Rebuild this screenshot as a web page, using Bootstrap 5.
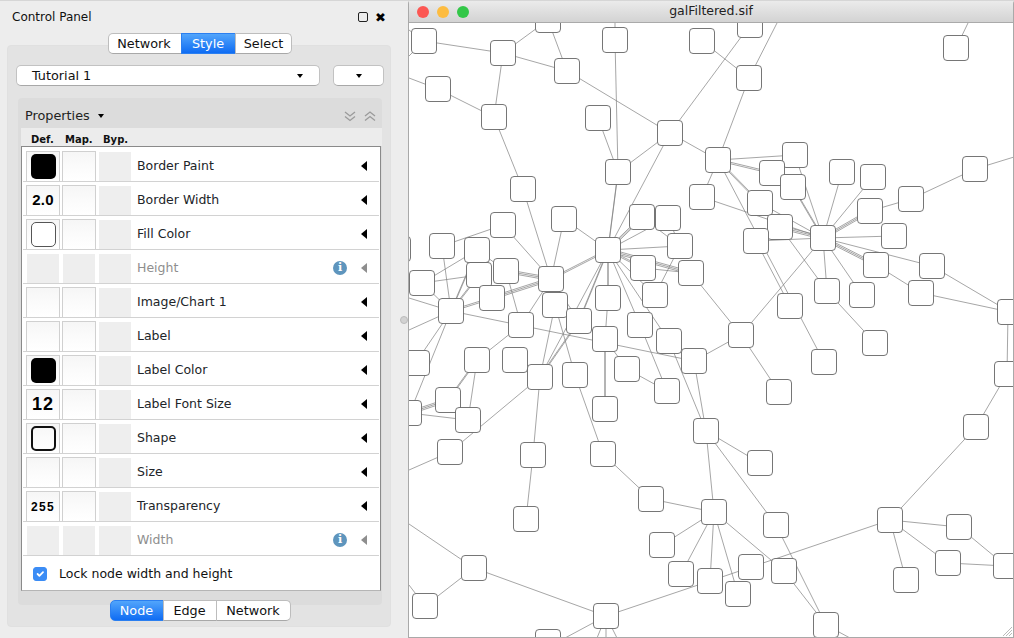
<!DOCTYPE html>
<html lang="en">
<head>
  <meta charset="UTF-8" />
  <title>Control Panel - galFiltered.sif</title>
  <link href="https://cdn.jsdelivr.net/npm/bootstrap@5.3.3/dist/css/bootstrap.min.css" rel="stylesheet" />
  <style>
    html, body { height: 100%; }
    body {
      background: #ededed;
      color: #111;
      font-family: "DejaVu Sans", "Liberation Sans", sans-serif;
      font-size: 12.5px;
      overflow: hidden;
      border-top: 1px solid #d6d6d6;
    }
    /* left dock */
    .dock { width: 399px; padding: 0 8px 11px 7px; flex: none; }
    .dock-title { height: 31px; padding: 1px 5px 0 5px; font-size: 12px; }
    .dock-max { width: 10px; height: 10px; border: 1.5px solid #222; border-radius: 2px; }
    .dock-close { font-size: 13px; line-height: 1; color: #000; margin-left: 7px; }
    .dock-box { background: #e3e3e3; border: 1px solid #e0e0e0; border-radius: 4px; height: 582px; margin-top: 13px; padding: 0 6px 0 8px; }
    .seg { margin-top: -13px; }
    .seg .btn {
      background: #fff;
      border: 1px solid #bdbdbd;
      border-bottom-color: #a8a8a8;
      color: #111;
      font-size: 12.8px;
      line-height: 18px;
      padding: 0;
      border-radius: 5px;
      height: 21px;
    }
    .seg .btn.on { background: linear-gradient(#52a5fb, #0f6cf3); border-color: #2b7ff0; color: #fff; }
    .seg .seg-net-top { width: 74px; flex: none; padding-right: 2px; }
    .seg .seg-style { width: 55px; flex: none; padding-right: 1px; }
    .seg .seg-select { width: 57px; flex: none; }
    .seg .seg-node { width: 54px; flex: none; }
    .seg .seg-net-bottom { width: 75px; flex: none; }
    .pick-row { margin-top: 11px; gap: 13px; }
    .pick {
      height: 21px; background: #fff; border: 1px solid #c2c2c2; border-bottom-color: #a8a8a8;
      border-radius: 5px; font-size: 12.8px; flex: none;
    }
    .pick-main { width: 304px; padding: 0 16px 0 15px; }
    .pick-side { width: 51px; }
    .tri-down { width: 0; height: 0; border-left: 3.5px solid transparent; border-right: 3.5px solid transparent; border-top: 4px solid #000; }
    .props { background: #dcdcdc; border-radius: 4px; margin: 12px 0 0 2px; height: 507px; padding: 0 1px 0 3px; width: 364px; }
    .props-head { height: 30px; padding: 6px 5px 0 4px; font-size: 12.8px; color: #222; flex: none; }
    .props-cols { height: 18px; background: #ececec; margin: 0 -1px 0 0; padding-top: 4px; font-size: 10px; font-weight: 700; flex: none; }
    .props-cols span { display: block; }
    .col-def { width: 34px; margin-left: 10px; }
    .col-map { width: 38px; }
    .prop-list { background: #fff; border: 1px solid #8a8a8a; border-bottom-color: #b5b5b5; border-radius: 0; height: 445px; width: 360px; padding-top: 1px; }
    .prop-row {
      height: 34px; border: 0; border-bottom: 1px solid #d2d2d2; border-radius: 0;
      padding: 3px 12px 0 3px; margin: 0 1px; font-size: 12.5px; background: #fff;
      gap: 2px; flex: none;
    }
    .prop-row.off { color: #8e8e8e; }
    .cell {
      width: 34px; height: 30px; flex: none;
      background: linear-gradient(#f6f6f6, #fbfbfb 50%, #fff);
      border: 1px solid #d0d0d0; border-bottom: 0;
      font-weight: 700; color: #000;
      font-family: "Liberation Sans", sans-serif;
    }
    .cell-byp { background: #eee; border: 0; width: 32px; height: 29px; margin: 1px 0 0 1px; }
    .prop-row.off .cell { background: #eee; border: 0; width: 32px; height: 29px; margin: 1px 1px 0 1px; }
    .prop-row.off .cell.cell-byp { margin-left: 1px; margin-right: 0; }
    .val-big { font-size: 15px; letter-spacing: .2px; }
    .val-large { font-size: 18px; letter-spacing: 1px; }
    .val-num { font-size: 12px; letter-spacing: 1.4px; }
    .swatch { width: 25px; height: 25px; border-radius: 5px; }
    .swatch-fill { background: #000; }
    .swatch-white { background: #fff; border: 1px solid #555; }
    .swatch-shape { background: transparent; border: 2px solid #111; }
    .prop-name { margin-left: 4px; }
    .tri-left { width: 0; height: 0; border-top: 5.5px solid transparent; border-bottom: 5.5px solid transparent; border-right: 6px solid #000; }
    .off .tri-left { border-right-color: #8e8e8e; }
    .info-dot {
      width: 14px; height: 14px; border-radius: 50%; background: #5e95bd; color: #fff;
      font: 700 11px/14px "DejaVu Serif", serif; text-align: center; margin-right: 14px;
    }
    .lock-row { height: 33px; padding: 3px 0 0 10px; margin: 0 1px; flex: none; }
    .lock-row .form-check-input { width: 14px; height: 14px; margin: 0 12px 0 0; border-radius: 3px; background-color: #3b8cf5; border-color: #3b8cf5; float: none; opacity: 1; flex: none; }
    .seg-bottom { margin-top: -5px; }
    /* splitter */
    .split { width: 9px; flex: none; }
    .split-dot { width: 8px; height: 8px; border-radius: 50%; background: #d2d2d2; border: 1px solid #bbb; }
    /* network window */
    .net-win { border: 1px solid #a9a9a9; border-top: 0; border-radius: 4px 4px 0 0; min-width: 0; margin-top: -1px; }
    .net-bar {
      height: 23px; flex: none; position: relative;
      background: linear-gradient(#ebebeb, #d3d3d3);
      border-top: 1px solid #d9d9d9; border-bottom: 1px solid #aaa;
      font-size: 12.5px; color: #222;
    }
    .lights { position: absolute; left: 8px; top: 5px; gap: 8px; }
    .light { width: 12px; height: 12px; border-radius: 50%; }
    .light-r { background: #fc5753; }
    .light-y { background: #fdbc40; }
    .light-g { background: #33c748; }
    .net-canvas { background: #fff; display: block; width: 604px; height: 614px; }
  </style>
</head>
<body class="d-flex">

  <!-- Control panel -->
  <div class="dock d-flex flex-column">
    <div class="dock-title d-flex align-items-center justify-content-between">
      <span>Control Panel</span>
      <span class="d-flex align-items-center"><span class="dock-max"></span><span class="dock-close">✖</span></span>
    </div>
    <div class="dock-box d-flex flex-column">
      <div class="btn-group seg align-self-center">
        <button class="btn seg-net-top" type="button">Network</button>
        <button class="btn on seg-style" type="button">Style</button>
        <button class="btn seg-select" type="button">Select</button>
      </div>
      <div class="d-flex pick-row">
        <div class="pick pick-main d-flex align-items-center justify-content-between"><span>Tutorial 1</span><span class="tri-down"></span></div>
        <div class="pick pick-side d-flex align-items-center justify-content-center"><span class="tri-down"></span></div>
      </div>
      <div class="props d-flex flex-column">
        <div class="props-head d-flex align-items-center">
          <span>Properties</span><span class="tri-down ms-2"></span>
          <svg class="ms-auto" width="12" height="12" viewBox="0 0 12 12" fill="none" stroke="#9a9a9a" stroke-width="1.3"><path d="M1 2l5 4 5-4M1 6.500l5 4 5-4"/></svg>
          <svg class="ms-2" width="12" height="12" viewBox="0 0 12 12" fill="none" stroke="#9a9a9a" stroke-width="1.3"><path d="M1 6l5-4 5 4M1 10.500l5-4 5 4"/></svg>
        </div>
        <div class="props-cols d-flex align-items-center"><span class="col-def">Def.</span><span class="col-map">Map.</span><span>Byp.</span></div>
        <div class="prop-list list-group" id="propList"></div>
      </div>
      <div class="btn-group seg seg-bottom align-self-center">
        <button class="btn on seg-node" type="button">Node</button>
        <button class="btn seg-node" type="button">Edge</button>
        <button class="btn seg-net-bottom" type="button">Network</button>
      </div>
    </div>
  </div>

  <div class="split d-flex align-items-center justify-content-center"><span class="split-dot"></span></div>

  <!-- Network view -->
  <div class="net-win flex-grow-1 d-flex flex-column">
    <div class="net-bar d-flex align-items-center justify-content-center">
      <div class="lights d-flex"><span class="light light-r"></span><span class="light light-y"></span><span class="light light-g"></span></div>
      <span>galFiltered.sif</span>
    </div>
    <svg class="net-canvas" id="net" viewBox="409 23 604 614" xmlns="http://www.w3.org/2000/svg"></svg>
  </div>

  <script>
    // Visual property rows
    var props = [
      ["Border Paint", '<span class="swatch swatch-fill"></span>'],
      ["Border Width", '<span class="val-big">2.0</span>'],
      ["Fill Color", '<span class="swatch swatch-white"></span>'],
      ["Height", "", true],
      ["Image/Chart 1", ""],
      ["Label", ""],
      ["Label Color", '<span class="swatch swatch-fill"></span>'],
      ["Label Font Size", '<span class="val-large">12</span>'],
      ["Shape", '<span class="swatch swatch-shape"></span>'],
      ["Size", ""],
      ["Transparency", '<span class="val-num">255</span>'],
      ["Width", "", true]
    ];
    var rows = props.map(function (p) {
      return '<div class="prop-row list-group-item d-flex' + (p[2] ? ' off' : '') + '">' +
        '<div class="cell d-flex align-items-center justify-content-center">' + p[1] + '</div>' +
        '<div class="cell"></div><div class="cell cell-byp"></div>' +
        '<span class="prop-name align-self-center">' + p[0] + '</span>' +
        '<span class="ms-auto d-flex align-items-center align-self-center">' +
        (p[2] ? '<span class="info-dot">i</span>' : '') + '<span class="tri-left"></span></span></div>';
    }).join("");
    rows += '<div class="lock-row form-check d-flex align-items-center">' +
      '<input class="form-check-input" type="checkbox" checked id="lockSize" />' +
      '<label for="lockSize">Lock node width and height</label></div>';
    document.getElementById("propList").innerHTML = rows;

    // Node centres, page coordinates
    var nodes = [
      [424,41],[503,53],[548,20],[615,40],[702,41],[567,71],[438,89],[494,117],[598,118],[670,133],
      [523,189],[618,172],[718,160],[702,197],[564,219],[642,217],[668,218],[750,25],[749,78],[956,48],
      [795,155],[772,173],[842,172],[873,177],[793,187],[975,169],[911,199],[760,203],[870,211],[780,227],
      [894,236],[823,238],[756,241],[876,265],[932,266],[921,293],[827,291],[862,295],[790,306],[1010,312],
      [503,225],[442,246],[477,250],[608,250],[680,246],[479,275],[506,271],[643,268],[691,273],[551,279],
      [422,283],[655,295],[608,298],[492,298],[555,305],[451,311],[579,321],[640,325],[521,325],[669,341],
      [605,339],[694,361],[477,360],[515,360],[627,369],[540,377],[575,375],[417,363],[667,391],[448,400],
      [605,409],[468,420],[409,413],[450,452],[533,455],[603,454],[651,499],[526,519],[662,545],[681,574],
      [474,568],[710,581],[425,606],[606,616],[548,642],[741,335],[875,343],[824,362],[779,392],[706,431],
      [760,463],[714,512],[776,525],[890,520],[976,427],[1007,374],[959,527],[948,563],[1006,566],[906,580],
      [751,567],[784,571],[738,594],[826,625],[398,249]
    ];

    // Edges: x1, y1, x2, y2, optional number of parallel lines
    var edges = [
      [424,41,503,53],[424,41,409,30],[424,41,409,56],[503,53,548,20],[503,53,567,71],[548,20,567,71],
      [409,78,438,89],[438,89,494,117],[494,117,503,53],[494,117,523,189],[567,71,670,133],[615,40,615,23],
      [615,40,618,172],[598,118,618,172],[618,172,670,133],[670,133,608,250],[670,133,718,160],[670,133,750,25],
      [702,41,749,78],[749,78,777,23],[749,78,718,160],[956,48,968,23],[523,189,551,279],
      [618,172,608,250,2],[718,160,702,197],[718,160,795,155],[718,160,772,173,2],[718,160,760,203,2],
      [718,160,824,362],[702,197,823,238],[823,238,793,187,2],[823,238,795,155],[823,238,842,172],[823,238,873,177],
      [823,238,870,211,3],[823,238,894,236],[823,238,876,265,3],[823,238,932,266],[823,238,827,291],[823,238,862,295],
      [823,238,780,227,3],[823,238,756,241],[823,238,760,203],[823,238,741,335],[780,227,827,291],[756,241,790,306],
      [911,199,870,211],[911,199,975,169],[975,169,1014,157],[876,265,921,293],[921,293,1010,312],[932,266,1010,312],
      [827,291,875,343],[741,335,779,392],[741,335,694,361],[691,273,741,335],
      [608,250,564,219],[608,250,642,217,3],[608,250,668,218],[608,250,680,246],[608,250,643,268,2],[608,250,691,273,3],
      [608,250,655,295],[608,250,608,298,2],[608,250,551,279,2],[608,250,579,321,2],[608,250,640,325],[608,250,669,341],
      [608,250,540,377],[642,217,680,246],[668,218,680,246],[680,246,655,295],[643,268,691,273],
      [551,279,503,225],[551,279,564,219],[551,279,506,271,3],[551,279,492,298,3],[551,279,521,325],[551,279,579,321],
      [506,271,521,325],[477,250,506,271],[442,246,503,225],[442,246,451,311],[477,250,451,311,2],[479,275,451,311,2],
      [492,298,451,311,2],[422,283,451,311],[477,250,422,283],[479,275,422,283],[409,298,451,311],[451,311,409,330],
      [451,311,694,361],[451,311,421,355],[451,311,413,405],[448,400,477,360,2],[448,400,409,413,3],[468,420,477,360],
      [468,420,409,413],[450,452,540,377],[450,452,409,470],[533,455,540,377],[533,455,526,519],[575,375,555,305],
      [575,375,603,454],[603,454,651,499],[651,499,714,512],[605,409,605,339,2],[605,339,608,298],[627,369,605,339],
      [627,369,667,391],[640,325,667,391],[694,361,706,431],[669,341,706,431],[521,325,477,360],[540,377,555,305],
      [540,377,579,321,2],[706,431,760,463],[706,431,776,525],[706,431,714,512],[714,512,662,545],[714,512,681,574],
      [714,512,710,581],[714,512,738,594],[714,512,784,571],[890,520,710,581],[776,525,826,625],[784,571,826,625],
      [890,520,976,427],[976,427,1007,374],[1007,374,1008,313],[890,520,959,527],[890,520,948,563],[890,520,906,580],
      [959,527,1006,566],[948,563,1006,566],[826,625,850,638],[474,568,409,524],[474,568,425,606],[409,585,425,606],
      [474,568,606,616],[606,616,710,581],[606,616,565,638],[606,616,597,638],[606,616,606,638],[606,616,617,638]
    ];

    var svg = "";
    edges.forEach(function (e) {
      var n = e[4] === undefined ? 1 : e[4];
      for (var i = 0; i < n; i++) {
        var off = (i - (n - 1) / 2) * 1.5;
        svg += '<line x1="' + e[0] + '" y1="' + (e[1] + off) + '" x2="' + e[2] + '" y2="' + (e[3] + off) + '" stroke="#808080" stroke-width=".7"/>';
      }
    });
    nodes.forEach(function (n) {
      svg += '<rect x="' + (n[0] - 12.5) + '" y="' + (n[1] - 12.5) + '" width="25" height="25" rx="3.500" fill="#fff" stroke="#666" stroke-width=".9"/>';
    });
    // resize grip, bottom right
    svg += '<path d="M1003 636l9-9M1006 636l6-6M1009 636l3-3" stroke="#aaa" stroke-width=".8" fill="none"/>';
    document.getElementById("net").innerHTML = svg;
  </script>
  <script src="https://cdn.jsdelivr.net/npm/bootstrap@5.3.3/dist/js/bootstrap.bundle.min.js"></script>
</body>
</html>
